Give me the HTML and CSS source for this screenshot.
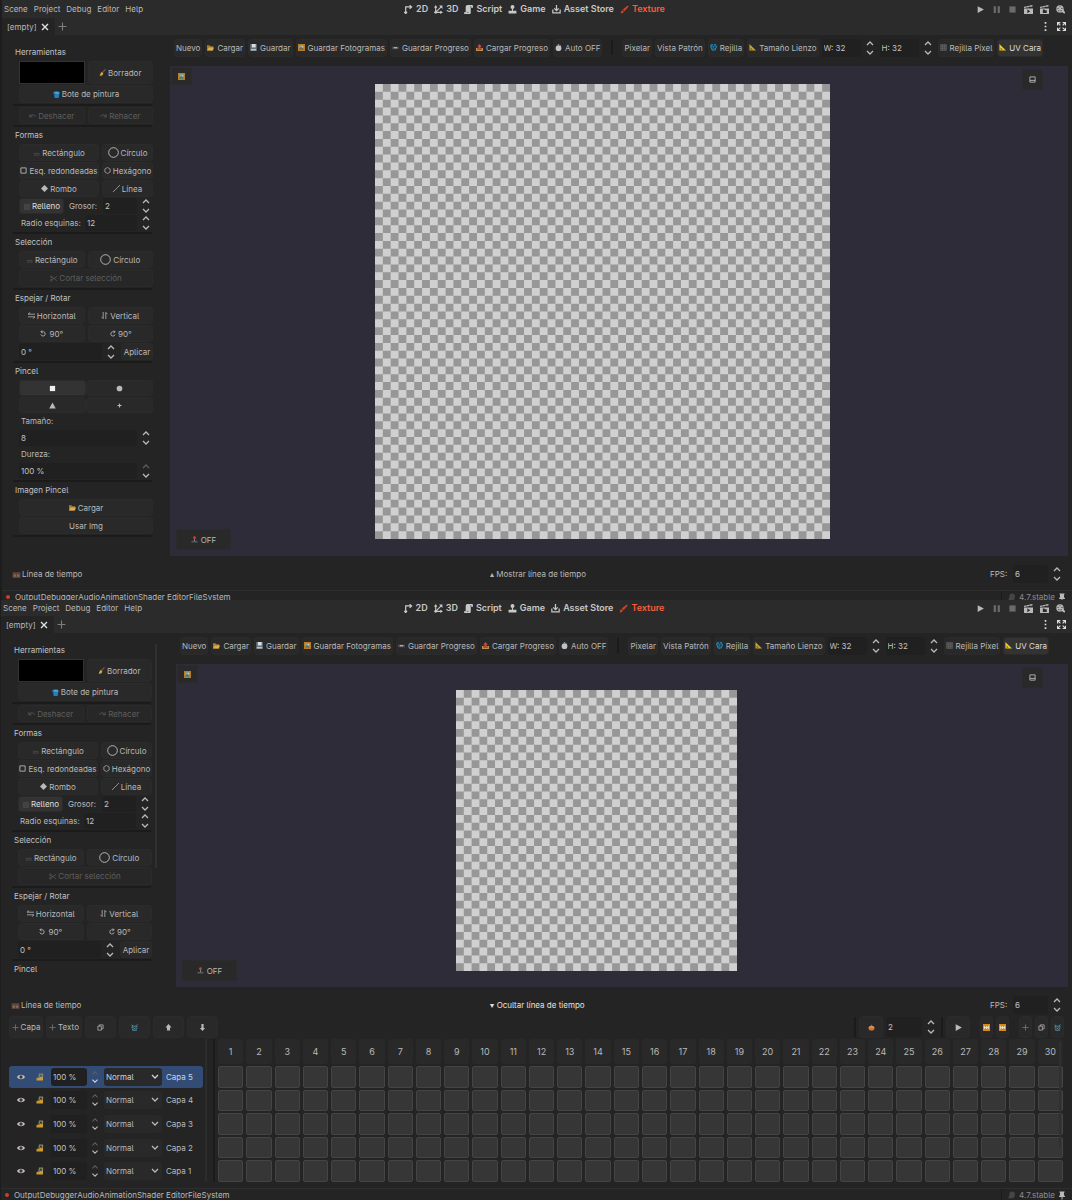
FILE: index.html
```html
<!DOCTYPE html>
<html lang="es">
<head>
<meta charset="utf-8">
<meta name="viewport" content="width=device-width, initial-scale=1">
<title>Texture Editor</title>
<link rel="stylesheet" href="styles.css">
</head>
<body>

<svg class="sprite" aria-hidden="true">
  <symbol id="i-2d" viewBox="0 0 16 16"><path d="M3 15V3.500H13M10 .5l3.500 3L10 6.500M.5 12L3 15.500 5.500 12" fill="none" stroke="currentColor" stroke-width="2.200"/></symbol>
  <symbol id="i-3d" viewBox="0 0 16 16"><path d="M3 2v11h11M3 13L13 3" fill="none" stroke="currentColor" stroke-width="2"/><path d="M0 5l3-5 3 5zM11 10l5 3-5 3zM9 1h6v6z" fill="currentColor"/><circle cx="3" cy="13" r="2.500" fill="currentColor"/></symbol>
  <symbol id="i-script" viewBox="0 0 16 16"><path d="M6 0h8a2 2 0 0 1 2 2v3h-4v9a2 2 0 0 1-2 2H2a2 2 0 0 1-2-3h3V3a3 3 0 0 1 3-3z" fill="currentColor"/><path d="M12 2v3M5 13h3" stroke="#2b2b2b" stroke-width="1"/></symbol>
  <symbol id="i-game" viewBox="0 0 16 16"><circle cx="8" cy="3.500" r="3.500" fill="currentColor"/><path d="M7 6h2v4h6v5H1v-5h6z" fill="currentColor"/></symbol>
  <symbol id="i-asset" viewBox="0 0 16 16"><path d="M8 0v9M4 6l4 4 4-4M1.500 8v6h13V8" fill="none" stroke="currentColor" stroke-width="2.200"/></symbol>
  <symbol id="i-brush" viewBox="0 0 16 16"><path d="M14 1l1.500 1.500L8 11l-3-3zM4 9l3 3c-1 2-3 3-6 3 1-2 1-4 3-6z" fill="#c9482c"/></symbol>
  <symbol id="i-play" viewBox="0 0 16 16"><path d="M3 2l11 6-11 6z" fill="currentColor"/></symbol>
  <symbol id="i-pause" viewBox="0 0 16 16"><path d="M3 2h4v12H3zM10 2h4v12h-4z" fill="currentColor"/></symbol>
  <symbol id="i-stop" viewBox="0 0 16 16"><path d="M2.500 2.500h11v11h-11z" fill="currentColor"/></symbol>
  <symbol id="i-scene" viewBox="0 0 16 16"><path d="M0 3l15-3v2.500L0 5.500zM0 6h16v9a1 1 0 0 1-1 1H1a1 1 0 0 1-1-1z" fill="currentColor"/><path d="M6 7.500l5 3.500-5 3.500z" fill="#2b2b2b"/><path d="M3 1.500l2 3M8 .5l2 3" stroke="#2b2b2b"/></symbol>
  <symbol id="i-clap" viewBox="0 0 16 16"><path d="M0 3l15-3v2.500L0 5.500zM0 6h16v9a1 1 0 0 1-1 1H1a1 1 0 0 1-1-1z" fill="currentColor"/><path d="M5 8h3l1 1.500h3V14H5z" fill="#2b2b2b"/><path d="M3 1.500l2 3M8 .5l2 3" stroke="#2b2b2b"/></symbol>
  <symbol id="i-movie" viewBox="0 0 16 16"><circle cx="7" cy="7" r="6.500" fill="currentColor"/><path d="M9 12c2 0 3 3 7 3v-3c-2 0-2-3-3-5z" fill="currentColor"/><g fill="#2b2b2b"><circle cx="7" cy="3" r="1"/><circle cx="3.500" cy="6" r="1"/><circle cx="10.500" cy="6" r="1"/><circle cx="5" cy="10" r="1"/><circle cx="9" cy="10" r="1"/></g></symbol>
  <symbol id="i-dots" viewBox="0 0 16 16"><path d="M6.500 0h3v3h-3zM6.500 6.500h3v3h-3zM6.500 13h3v3h-3z" fill="currentColor"/></symbol>
  <symbol id="i-expand" viewBox="0 0 16 16"><path d="M1 6V1h5M10 1h5v5M15 10v5h-5M6 15H1v-5M1 1l5 5M15 1l-5 5M15 15l-5-5M1 15l5-5" fill="none" stroke="currentColor" stroke-width="2"/></symbol>
  <symbol id="i-close" viewBox="0 0 16 16"><path d="M2 2l12 12M14 2L2 14" stroke="currentColor" stroke-width="2.800" fill="none"/></symbol>
  <symbol id="i-plus" viewBox="0 0 16 16"><path d="M8 1v14M1 8h14" stroke="currentColor" stroke-width="2" fill="none"/></symbol>
  <symbol id="i-updown" viewBox="0 0 8 14"><path d="M1 4l3-3 3 3M1 10l3 3 3-3" fill="none" stroke="currentColor" stroke-width="1.300"/></symbol>
  <symbol id="i-updown-max" viewBox="0 0 8 14"><path d="M1 4l3-3 3 3" fill="none" stroke="#5c5c5c" stroke-width="1.300"/><path d="M1 10l3 3 3-3" fill="none" stroke="currentColor" stroke-width="1.300"/></symbol>
  <symbol id="i-chevron" viewBox="0 0 8 8"><path d="M1 2l3 3 3-3" fill="none" stroke="currentColor" stroke-width="1.300"/></symbol>
  <symbol id="i-folder" viewBox="0 0 16 16"><path d="M0 3h6l1 2h7v10H0z" fill="#a87a2c"/><path d="M4 8h12l-3 7H0z" fill="#dcae52"/></symbol>
  <symbol id="i-disk" viewBox="0 0 16 16"><path d="M0 0h16v16H0z" fill="#59616b"/><path d="M4 0h9v8H4z" fill="#d9dde0"/><path d="M2 11h12v4H2z" fill="#b9c0c6"/></symbol>
  <symbol id="i-frame" viewBox="0 0 16 16"><path d="M0 0h16v16H0z" fill="#bd7c20"/><path d="M3 3h10v10H3z" fill="#79a8b8"/><path d="M3 10l4-3 6 4v2H3z" fill="#59735c"/><circle cx="10" cy="6" r="1.500" fill="#e4d9a8"/></symbol>
  <symbol id="i-box" viewBox="0 0 16 16"><path d="M0 6h16v6H0z" fill="#484848"/><path d="M4 7h8v3H4z" fill="#b8b8b8"/></symbol>
  <symbol id="i-outbox" viewBox="0 0 16 16"><path d="M0 9h16v7H0z" fill="#c58a4e"/><path d="M3 10h10v3H3z" fill="#5e4634"/><path d="M8 0l5 6h-3v5H6V6H3z" fill="#d44a3a"/></symbol>
  <symbol id="i-watch" viewBox="0 0 16 16"><circle cx="8" cy="9.500" r="6.500" fill="#bfc3c6"/><path d="M6.500 0h3v4h-3zM12 2l2 2-1 1-2-2z" fill="#8d9194"/></symbol>
  <symbol id="i-globe" viewBox="0 0 16 16"><path d="M2 2h12v6h-2v6H4V9H2z" fill="none" stroke="#1c8fc4" stroke-width="3" stroke-dasharray="5 2"/><path d="M5 6h6M8 4v8" stroke="#1c84b4" stroke-width="1.500"/></symbol>
  <symbol id="i-ruler" viewBox="0 0 16 16"><path d="M1 0l15 15H1z" fill="currentColor"/><path d="M4 9l4 3.500H4z" fill="#2b2b2b"/></symbol>
  <symbol id="i-grid" viewBox="0 0 16 16"><path d="M1 1h14v14H1zM5.500 1v14M10.500 1v14M1 5.500h14M1 10.500h14" fill="#484848" stroke="#6c6c6c" stroke-width="1"/></symbol>
  <symbol id="i-broom" viewBox="0 0 16 16"><path d="M15 1L8 8" stroke="#8d5636" stroke-width="2.500"/><path d="M6 6l4 4c-1 4-5 6-9 5 2-2 2-5 5-9z" fill="#dca53a"/></symbol>
  <symbol id="i-bucket" viewBox="0 0 16 16"><path d="M1 4h14l-2 12H4z" fill="#2380bd"/><ellipse cx="8" cy="4" rx="7" ry="3" fill="#4aa0cf"/><path d="M1 5h3v6" stroke="#1c679b" stroke-width="2" fill="none"/></symbol>
  <symbol id="i-undo" viewBox="0 0 16 16"><path d="M2 5v6h6M2 11c4-6 11-6 13 0" fill="none" stroke="currentColor" stroke-width="1.800"/></symbol>
  <symbol id="i-redo" viewBox="0 0 16 16"><path d="M14 5v6H8M14 11C10 5 3 5 1 11" fill="none" stroke="currentColor" stroke-width="1.800"/></symbol>
  <symbol id="i-rect" viewBox="0 0 16 16"><path d="M3 10h11v4H3z" fill="none" stroke="#505050" stroke-width="1.600"/></symbol>
  <symbol id="i-circle" viewBox="0 0 16 16"><circle cx="8" cy="8" r="7" fill="none" stroke="currentColor" stroke-width="1.400"/></symbol>
  <symbol id="i-square" viewBox="0 0 16 16"><path d="M2 2h12v12H2z" fill="none" stroke="currentColor" stroke-width="2"/></symbol>
  <symbol id="i-hex" viewBox="0 0 16 16"><path d="M8 1l6 3.500v7L8 15l-6-3.500v-7z" fill="none" stroke="currentColor" stroke-width="1.600"/></symbol>
  <symbol id="i-diamond" viewBox="0 0 16 16"><path d="M8 0l8 8-8 8-8-8z" fill="currentColor"/></symbol>
  <symbol id="i-line" viewBox="0 0 16 16"><path d="M0 16L16 0" stroke="currentColor" stroke-width="1.600"/></symbol>
  <symbol id="i-fill" viewBox="0 0 16 16"><path d="M3 3h12v12H3z" fill="#424242" stroke="#555"/></symbol>
  <symbol id="i-cut" viewBox="0 0 16 16"><path d="M4 11L16 3M4 5l12 8" stroke="currentColor" stroke-width="1.600"/><circle cx="3" cy="4" r="2" fill="none" stroke="currentColor" stroke-width="1.600"/><circle cx="3" cy="12" r="2" fill="none" stroke="currentColor" stroke-width="1.600"/></symbol>
  <symbol id="i-horiz" viewBox="0 0 16 16"><path d="M16 5H0l5-4M0 11h16l-5 4" fill="none" stroke="currentColor" stroke-width="1.800"/></symbol>
  <symbol id="i-vert" viewBox="0 0 16 16"><path d="M5 0v15l-4-4M11 16V1l4 4" fill="none" stroke="currentColor" stroke-width="1.800"/></symbol>
  <symbol id="i-ccw" viewBox="0 0 16 16"><path d="M5 1L2 4l4 3M2 4h6a5 5 0 1 1-6 6" fill="none" stroke="currentColor" stroke-width="1.900"/></symbol>
  <symbol id="i-cw" viewBox="0 0 16 16"><path d="M11 1l3 3-4 3M14 4H8a5 5 0 1 0 6 6" fill="none" stroke="currentColor" stroke-width="1.900"/></symbol>
  <symbol id="i-bsquare" viewBox="0 0 16 16"><path d="M2 2h12v12H2z" fill="#f0f0f0"/></symbol>
  <symbol id="i-bcircle" viewBox="0 0 16 16"><circle cx="8" cy="8" r="6.500" fill="currentColor"/></symbol>
  <symbol id="i-btri" viewBox="0 0 16 16"><path d="M8 1l7.500 14H.5z" fill="currentColor"/></symbol>
  <symbol id="i-bstar" viewBox="0 0 16 16"><path d="M8 2l1.500 4.500L14 8 9.500 9.500 8 14 6.500 9.500 2 8l4.500-1.500z" fill="currentColor"/></symbol>
  <symbol id="i-film" viewBox="0 0 16 16"><path d="M1 4h14v10H1z" fill="#5d4638"/><path d="M3 8h4v4H3zM9 8h4v4H9z" fill="#8a6a55"/></symbol>
  <symbol id="i-joy" viewBox="0 0 16 16"><path d="M1 11h14v4H1z" fill="#4f5a60"/><path d="M7 5h2v7H7z" fill="#8a979e"/><circle cx="8" cy="4" r="3.200" fill="#c9402f"/></symbol>
  <symbol id="i-window" viewBox="0 0 16 16"><path d="M2 2h12v12H2zM2 10h12" fill="none" stroke="currentColor" stroke-width="2"/></symbol>
  <symbol id="i-pin" viewBox="0 0 16 16"><path d="M3 0h10v2h-1v5l2 3v1H9v5H7v-5H2v-1l2-3V2H3z" fill="currentColor"/></symbol>
  <symbol id="i-bell" viewBox="0 0 16 16"><path d="M9 1c4 0 6 3 5 7l-2 5H2c0-2 2-2 2-6s2-6 5-6z" fill="currentColor"/></symbol>
  <symbol id="i-copy" viewBox="0 0 16 16"><path d="M2 5h8v9H2zM5 5V2h9v9h-4" fill="none" stroke="currentColor" stroke-width="1.700"/></symbol>
  <symbol id="i-trash" viewBox="0 0 16 16"><path d="M2 5h12l-2 10H4z" fill="none" stroke="#5c9fb5" stroke-width="2" stroke-dasharray="3 1"/><path d="M1 2l5 3M15 1l-5 4M5 8l6 5M11 8l-6 5" stroke="#5c9fb5" stroke-width="1.600"/></symbol>
  <symbol id="i-up" viewBox="0 0 16 16"><path d="M8 0l7 8h-3.500v7h-7V8H1z" fill="currentColor"/></symbol>
  <symbol id="i-down" viewBox="0 0 16 16"><path d="M8 16L2 9h3.500V0h5v9H14z" fill="currentColor"/></symbol>
  <symbol id="i-onion" viewBox="0 0 16 16"><path d="M8 0l1 4c4 0 6 3 6 5 0 4-3 6-7 6s-7-2-7-6c0-2 2-5 6-5z" fill="#c9743b"/><path d="M3 8c2-2 8-2 10 0" stroke="#edbd8f" stroke-width="2" fill="none"/></symbol>
  <symbol id="i-ff" viewBox="0 0 16 16"><path d="M0 0h16v16H0z" fill="#d98613"/><path d="M2 4l5 4-5 4zM7 4l5 4-5 4zM12 4h2v8h-2z" fill="#f1e6d4"/></symbol>
  <symbol id="i-rw" viewBox="0 0 16 16"><path d="M0 0h16v16H0z" fill="#d98613"/><path d="M14 4L9 8l5 4zM9 4L4 8l5 4zM2 4h2v8H2z" fill="#f1e6d4"/></symbol>
  <symbol id="i-eye" viewBox="0 0 16 16"><path d="M0 8c4-6 12-6 16 0-4 6-12 6-16 0z" fill="#c8c8c8"/><circle cx="8" cy="8" r="3.500" fill="#4a352d"/></symbol>
  <symbol id="i-lock" viewBox="0 0 16 16"><path d="M1 10L14 7v8H1z" fill="#d09c2c"/><path d="M6 8l1-6h6v6" fill="none" stroke="#8d8468" stroke-width="2.500"/><path d="M3 12l8-7" stroke="#6c8a86" stroke-width="1.500"/></symbol>
</svg>

<template id="header">
  <header class="top">
    <div class="menu-row">
      <nav class="menus"><button>Scene</button><button>Project</button><button>Debug</button><button>Editor</button><button>Help</button></nav>
      <nav class="modes">
        <button><svg><use href="#i-2d"/></svg>2D</button>
        <button><svg><use href="#i-3d"/></svg>3D</button>
        <button><svg><use href="#i-script"/></svg>Script</button>
        <button><svg><use href="#i-game"/></svg>Game</button>
        <button><svg><use href="#i-asset"/></svg>Asset Store</button>
        <button class="current"><svg><use href="#i-brush"/></svg>Texture</button>
      </nav>
      <div class="run">
        <button aria-label="Play"><svg><use href="#i-play"/></svg></button>
        <button class="dim" aria-label="Pause"><svg><use href="#i-pause"/></svg></button>
        <button class="dim" aria-label="Stop"><svg><use href="#i-stop"/></svg></button>
        <button aria-label="Play scene"><svg><use href="#i-scene"/></svg></button>
        <button aria-label="Play custom scene"><svg><use href="#i-clap"/></svg></button>
        <button aria-label="Movie maker"><svg><use href="#i-movie"/></svg></button>
      </div>
    </div>
    <div class="tab-row">
      <div class="scene-tab"><span>[empty]</span><button aria-label="Close tab"><svg><use href="#i-close"/></svg></button></div>
      <button class="add-tab" aria-label="New tab"><svg><use href="#i-plus"/></svg></button>
      <div class="tab-tools">
        <button aria-label="Options"><svg><use href="#i-dots"/></svg></button>
        <button aria-label="Distraction free"><svg><use href="#i-expand"/></svg></button>
      </div>
    </div>
  </header>
</template>

<template id="sidebar">
  <aside class="tools">
    <h2>Herramientas</h2>
    <div class="row tall even"><button class="swatch" aria-label="Color"></button><button class="btn"><svg><use href="#i-broom"/></svg>Borrador</button></div>
    <button class="btn big"><svg><use href="#i-bucket"/></svg>Bote de pintura</button>
    <hr>
    <div class="row even"><button class="btn" disabled><svg><use href="#i-undo"/></svg>Deshacer</button><button class="btn" disabled><svg><use href="#i-redo"/></svg>Rehacer</button></div>
    <hr>
    <h2>Formas</h2>
    <div class="row shapes"><button class="btn"><svg><use href="#i-rect"/></svg>Rectángulo</button><button class="btn"><svg class="lg"><use href="#i-circle"/></svg>Círculo</button></div>
    <div class="row shapes"><button class="btn"><svg><use href="#i-square"/></svg>Esq. redondeadas</button><button class="btn"><svg><use href="#i-hex"/></svg>Hexágono</button></div>
    <div class="row shapes"><button class="btn"><svg><use href="#i-diamond"/></svg>Rombo</button><button class="btn"><svg><use href="#i-line"/></svg>Línea</button></div>
    <div class="row low fill-row"><button class="btn on"><svg><use href="#i-fill"/></svg>Relleno</button><label class="spin"><span>Grosor:</span><input type="text" value="2"><svg class="arrows"><use href="#i-updown"/></svg></label></div>
    <div class="row low"><label class="spin lead"><span>Radio esquinas:</span><input type="text" value="12"><svg class="arrows"><use href="#i-updown"/></svg></label></div>
    <hr>
    <h2>Selección</h2>
    <div class="row even"><button class="btn"><svg><use href="#i-rect"/></svg>Rectángulo</button><button class="btn"><svg class="lg"><use href="#i-circle"/></svg>Círculo</button></div>
    <button class="btn big" disabled><svg><use href="#i-cut"/></svg>Cortar selección</button>
    <hr>
    <h2>Espejar / Rotar</h2>
    <div class="row even"><button class="btn"><svg><use href="#i-horiz"/></svg>Horizontal</button><button class="btn"><svg><use href="#i-vert"/></svg>Vertical</button></div>
    <div class="row even"><button class="btn"><svg><use href="#i-ccw"/></svg>90°</button><button class="btn"><svg><use href="#i-cw"/></svg>90°</button></div>
    <div class="row"><label class="spin"><input type="text" value="0 °" aria-label="Ángulo"><svg class="arrows"><use href="#i-updown"/></svg></label><button class="btn apply">Aplicar</button></div>
    <hr>
    <h2 class="brush">Pincel</h2>
    <div class="row low even tight"><button class="btn on" aria-label="Cuadrado"><svg><use href="#i-bsquare"/></svg></button><button class="btn" aria-label="Redondo"><svg><use href="#i-bcircle"/></svg></button></div>
    <div class="row low even tight"><button class="btn" aria-label="Triángulo"><svg><use href="#i-btri"/></svg></button><button class="btn" aria-label="Estrella"><svg><use href="#i-bstar"/></svg></button></div>
    <div class="field">Tamaño:</div>
    <div class="row low"><label class="spin"><input type="text" value="8" aria-label="Tamaño"><svg class="arrows"><use href="#i-updown"/></svg></label></div>
    <div class="field">Dureza:</div>
    <div class="row low"><label class="spin"><input type="text" value="100 %" aria-label="Dureza"><svg class="arrows"><use href="#i-updown-max"/></svg></label></div>
    <hr>
    <h2>Imagen Pincel</h2>
    <button class="btn"><svg><use href="#i-folder"/></svg>Cargar</button>
    <button class="btn">Usar Img</button>
    <hr>
  </aside>
</template>

<template id="toolbar">
  <div class="toolbar">
    <button class="btn">Nuevo</button>
    <button class="btn"><svg><use href="#i-folder"/></svg>Cargar</button>
    <button class="btn"><svg><use href="#i-disk"/></svg>Guardar</button>
    <button class="btn"><svg><use href="#i-frame"/></svg>Guardar Fotogramas</button>
    <button class="btn"><svg><use href="#i-box"/></svg>Guardar Progreso</button>
    <button class="btn"><svg><use href="#i-outbox"/></svg>Cargar Progreso</button>
    <button class="btn"><svg><use href="#i-watch"/></svg>Auto OFF</button>
    <span class="rule"></span>
    <button class="btn">Pixelar</button>
    <button class="btn">Vista Patrón</button>
    <button class="btn"><svg><use href="#i-globe"/></svg>Rejilla</button>
    <button class="btn gold"><svg><use href="#i-ruler"/></svg>Tamaño Lienzo</button>
    <label class="spin"><input type="text" value="W: 32" aria-label="Ancho"><svg class="arrows"><use href="#i-updown"/></svg></label>
    <label class="spin"><input type="text" value="H: 32" aria-label="Alto"><svg class="arrows"><use href="#i-updown"/></svg></label>
    <button class="btn"><svg><use href="#i-grid"/></svg>Rejilla Píxel</button>
    <button class="btn on yellow"><svg><use href="#i-ruler"/></svg>UV Cara</button>
  </div>
</template>

<template id="overlays">
  <button class="btn float frame-toggle" aria-label="Referencia"><svg><use href="#i-frame"/></svg></button>
  <button class="btn float window-toggle" aria-label="Ventana"><svg><use href="#i-window"/></svg></button>
  <button class="btn float joystick"><svg><use href="#i-joy"/></svg>OFF</button>
</template>

<template id="status">
  <footer class="status">
    <span class="dot"></span>
    <nav><button>Output</button><button>Debugger</button><button>Audio</button><button>Animation</button><button>Shader Editor</button><button>FileSystem</button></nav>
    <div class="version"><svg class="bell"><use href="#i-bell"/></svg><span>4.7.stable</span><svg class="pin"><use href="#i-pin"/></svg></div>
  </footer>
</template>

<section class="editor closed">
  <div data-include="header"></div>
  <main class="work">
    <div data-include="sidebar"></div>
    <div class="stage">
      <div data-include="toolbar"></div>
      <div class="canvas">
        <svg class="board" viewBox="0 0 58 58" data-cells="58"></svg>
        <div data-include="overlays"></div>
      </div>
    </div>
  </main>
  <div class="timeline-bar">
    <span class="caption"><svg><use href="#i-film"/></svg>Línea de tiempo</span>
    <button class="toggle">▴ Mostrar línea de tiempo</button>
    <label class="spin fps"><span>FPS:</span><input type="text" value="6"><svg class="arrows"><use href="#i-updown"/></svg></label>
  </div>
  <div data-include="status"></div>
</section>

<section class="editor open">
  <div data-include="header"></div>
  <main class="work">
    <div data-include="sidebar"></div>
    <div class="stage">
      <div data-include="toolbar"></div>
      <div class="canvas">
        <svg class="board" viewBox="0 0 36 36" data-cells="36"></svg>
        <div data-include="overlays"></div>
      </div>
    </div>
  </main>
  <div class="timeline-bar">
    <span class="caption"><svg><use href="#i-film"/></svg>Línea de tiempo</span>
    <button class="toggle bright">▾ Ocultar línea de tiempo</button>
    <label class="spin fps"><span>FPS:</span><input type="text" value="6"><svg class="arrows"><use href="#i-updown"/></svg></label>
  </div>
  <div class="timeline-tools">
    <button class="btn add layer-add"><svg><use href="#i-plus"/></svg>Capa</button>
    <button class="btn add text-add"><svg><use href="#i-plus"/></svg>Texto</button>
    <button class="btn wide" aria-label="Duplicar capa"><svg><use href="#i-copy"/></svg></button>
    <button class="btn wide" aria-label="Borrar capa"><svg><use href="#i-trash"/></svg></button>
    <button class="btn wide" aria-label="Subir capa"><svg><use href="#i-up"/></svg></button>
    <button class="btn wide" aria-label="Bajar capa"><svg><use href="#i-down"/></svg></button>
    <div class="playback">
      <span class="rule"></span>
      <button class="btn mid" aria-label="Papel cebolla"><svg><use href="#i-onion"/></svg></button>
      <label class="spin"><input type="text" value="2" aria-label="Fotogramas de cebolla"><svg class="arrows"><use href="#i-updown"/></svg></label>
      <span class="rule"></span>
      <button class="btn mid play" aria-label="Reproducir"><svg><use href="#i-play"/></svg></button>
      <div class="pair"><button class="btn thin" aria-label="Siguiente"><svg><use href="#i-ff"/></svg></button><button class="btn thin" aria-label="Anterior"><svg><use href="#i-rw"/></svg></button></div>
      <div class="pair"><button class="btn thin add" aria-label="Añadir fotograma"><svg><use href="#i-plus"/></svg></button><button class="btn thin" aria-label="Duplicar fotograma"><svg><use href="#i-copy"/></svg></button><button class="btn thin" aria-label="Borrar fotograma"><svg><use href="#i-trash"/></svg></button></div>
    </div>
  </div>
  <div class="timeline">
    <div class="layers" id="layers"></div>
    <div class="frames" id="frames"></div>
  </div>
  <div data-include="status"></div>
</section>

<script src="app.js"></script>
</body>
</html>
```

FILE: app.js
```js
// Fill every placeholder with the template it names.
document.querySelectorAll('[data-include]').forEach((slot) => {
  slot.replaceWith(document.getElementById(slot.dataset.include).content.cloneNode(true));
});

// Transparency checkerboard: one unit per cell, light cell first.
document.querySelectorAll('.board').forEach((board) => {
  const n = Number(board.dataset.cells);
  let d = '';
  for (let y = 0; y < n; y++) {
    for (let x = (y + 1) % 2; x < n; x += 2) d += `M${x} ${y}h1v1h-1z`;
  }
  board.innerHTML = `<path class="dark" d="${d}"/>`;
});

const layers = document.getElementById('layers');
for (let n = 5; n >= 1; n--) {
  layers.insertAdjacentHTML('beforeend', `
    <div class="layer${n === 5 ? ' selected' : ''}">
      <button aria-label="Visible"><svg><use href="#i-eye"/></svg></button>
      <button aria-label="Bloquear"><svg><use href="#i-lock"/></svg></button>
      <label class="spin"><input type="text" value="100 %" aria-label="Opacidad"><svg class="arrows"><use href="#i-updown-max"/></svg></label>
      <label class="blend"><select aria-label="Fusión"><option>Normal</option></select><svg><use href="#i-chevron"/></svg></label>
      <span>Capa ${n}</span>
    </div>`);
}

const frames = document.getElementById('frames');
let cells = '';
for (let f = 1; f <= 30; f++) cells += `<button class="number">${f}</button>`;
for (let l = 5; l >= 1; l--) {
  for (let f = 1; f <= 30; f++) cells += `<button class="cell" aria-label="Capa ${l}, fotograma ${f}"></button>`;
}
frames.innerHTML = cells;
```

FILE: styles.css
```css
* { box-sizing: border-box; }

body {
  margin: 0;
  height: 100vh;
  display: grid;
  grid-template-rows: minmax(0, 1fr) minmax(0, 1fr);
  background: #242424;
  color: #b9b9b9;
  font: 8px/14px Inter, "Liberation Sans", sans-serif;
  font-feature-settings: "cv05";
}

.sprite { position: absolute; width: 0; height: 0; }
svg { width: 9px; height: 9px; flex: none; display: block; }

button, input, select { font: inherit; font-feature-settings: inherit; color: inherit; margin: 0; padding: 0; border: 0; background: none; }
button { display: flex; align-items: center; justify-content: center; white-space: nowrap; }

.editor {
  display: flex;
  flex-direction: column;
  min-height: 0;
  overflow: hidden;
  border-left: 2px solid #1d1d1d;
}
.open { border-left-width: 1px; }

/* header */
.top { flex: none; background: #2b2b2b; }
.menu-row { height: 18px; display: grid; grid-template-columns: 1fr auto 1fr; align-items: center; padding: 0 7px 0 2px; }
.open .menu-row { height: 16px; }
.menus { display: flex; gap: 6px; }
.modes { display: flex; gap: 6px; font-weight: 600; font-size: 9px; color: #c8c8c8; }
.modes button { gap: 3px; }
.modes .current { color: #fa5c3a; }
.run { display: flex; gap: 7px; justify-content: flex-end; }
.dim { color: #6b6b6b; }
.tab-row { height: 17px; display: flex; align-items: center; padding-right: 6px; }
.scene-tab { display: flex; align-items: center; gap: 4px; height: 17px; padding: 0 6px 0 5px; background: #242424; border-radius: 3px 3px 0 0; }
.scene-tab svg { color: #e0e0e0; width: 8px; height: 8px; }
.add-tab { color: #7d7d7d; margin-left: 3px; }
.tab-tools { margin-left: auto; display: flex; gap: 7px; color: #dcdcdc; }

/* shared controls */
.btn { gap: 2px; height: 17px; padding: 0 1px; background: #292929; border-radius: 4px; box-shadow: inset 0 0 0 1px #2b2b2b; }
.btn svg { width: 7px; height: 7px; }
.btn .lg { width: 11px; height: 11px; }
.btn.on { background: #333; color: #dedede; }
.btn:disabled { color: #5e5e5e; background: #272727; }
.spin { display: flex; align-items: center; flex: 1; min-width: 0; }
.spin input { flex: 1; width: 0; min-width: 0; height: 100%; padding-left: 2px; background: #202020; border-radius: 3px; color: #c2c2c2; }
.spin .arrows { width: 8px; height: 14px; margin: 0 3px 0 5px; }
.rule { width: 2px; height: 15px; background: #1b1b1b; }

/* work area */
.work { flex: 1; min-height: 0; display: flex; }
.tools {
  flex: none;
  width: 151px;
  display: flex;
  flex-direction: column;
  gap: 1px;
  padding: 10px 0 0 17px;
  overflow: hidden;
}
.open .tools { position: relative; width: 158px; padding-right: 7px; }
.open .tools::after { content: ""; position: absolute; right: 2px; top: 11px; width: 2px; height: 224px; background: #303030; }
.open .brush ~ * { display: none; }
.tools > * { flex: none; }
.tools h2 { margin: 0 0 0 -4px; font-size: 8px; font-weight: 400; line-height: 15px; color: #c2c2c2; }
.tools hr { height: 2px; margin: 0 1px 0 -6px; border: 0; background: #1b1b1b; align-self: stretch; }
.row { height: 17px; display: flex; gap: 3px; align-items: stretch; }
.row .btn { height: auto; }
.row.tall { height: 23px; }
.btn.big { height: 18px; }
.row.low { height: 16px; }
.even > * { flex: 1 1 0; }
.row.tight { gap: 0; }
.shapes > :first-child { flex: 0 0 80px; }
.shapes > :last-child { flex: 1; }
.swatch { background: #000; border: 1px solid #333; }
.fill-row .btn { flex: 0 0 45px; }
.fill-row .spin span { width: 36px; padding-left: 2px; }
.lead span { width: 66px; padding-left: 2px; }
.field { padding-left: 2px; line-height: 15px; }
.apply { flex: 0 0 32px; }

.stage { flex: 1; min-width: 0; display: flex; flex-direction: column; margin: 0 4px 0 17px; }
.toolbar { height: 31px; flex: none; display: flex; align-items: center; gap: 3px; padding: 0 0 6px 4px; }
.toolbar .btn { height: 18px; padding: 0 2px; gap: 3px; }
.toolbar .rule { margin: 0 6px; }
.toolbar .spin { flex: 0 0 55px; height: 18px; }
.gold svg { color: #c9a02c; }
.yellow svg { color: #f2c51f; }
.canvas { flex: 1; min-height: 0; position: relative; background: #2d2c38; padding: 18px 0 17px 205px; }
.open .canvas { padding: 26px 0 16px 280px; }
.board { height: 100%; width: auto; aspect-ratio: 1; background: #d0d0d0; }
.dark { fill: #979797; }
.float { position: absolute; height: 21px; background: #292929; }
.frame-toggle { left: 1px; top: 1px; width: 21px; height: 18px; }
.window-toggle { right: 25px; top: 3px; width: 21px; }
.joystick { left: 6px; bottom: 6px; width: 55px; gap: 3px; }

/* timeline */
.timeline-bar { flex: none; height: 34px; display: grid; grid-template-columns: 1fr auto 1fr; align-items: center; padding: 9px 8px 7px 10px; }
.open .timeline-bar { height: 29px; padding-bottom: 2px; }
.caption { display: flex; align-items: center; gap: 1px; }
.bright { color: #e2e2e2; }
.fps { justify-self: end; width: 74px; height: 18px; }
.fps span { width: 23px; }
.timeline-tools { flex: none; display: flex; gap: 3px; padding: 0 8px 1px; height: 23px; }
.timeline-tools .btn { height: 22px; }
.add svg { color: #6f6f6f; }
.layer-add { width: 34px; }
.text-add { width: 36px; }
.wide { width: 31px; }
.playback { margin-left: auto; display: flex; gap: 3px; align-items: center; }
.playback .spin { flex: 0 0 52px; height: 20px; }
.playback .rule { height: 20px; }
.mid { width: 24px; }
.play svg { width: 9px; height: 9px; }
.thin { width: 13px; }
.pair { display: flex; gap: 3px; margin-left: 7px; }

.timeline { flex: none; height: 149px; display: flex; padding: 0 9px 6px 8px; }
.layers { width: 198px; padding: 27px 2px 0 0; border-right: 2px solid #2c2c2c; display: grid; gap: 2px; grid-auto-rows: 1fr; }
.layer { display: flex; align-items: center; border-radius: 3px; padding: 1px 0; }
.layer > button { width: 20px; margin-left: 2px; }
.layer > button + button { width: 18px; margin: 0 2px 0 0; }
.layer button svg { width: 8px; height: 8px; }
.layer .spin { flex: 0 0 53px; height: 18px; }
.layer .spin .arrows { height: 12px; margin: 0 5px 0 4px; }
.blend { display: grid; grid-template-columns: 1fr 14px; width: 58px; height: 18px; align-items: center; background: #292929; border-radius: 3px; }
.blend select { grid-area: 1 / 1 / 2 / 3; appearance: none; padding-left: 2px; height: 18px; }
.blend svg { grid-area: 1 / 2; justify-self: center; width: 8px; height: 8px; pointer-events: none; }
.layer > span { margin-left: 4px; }
.selected { background: #324c76; color: #c8d3e6; }
.frames { position: relative; flex: 1; margin-left: 6px; padding-left: 3px; border-left: 2px solid #1b1b1b; display: grid; grid-template-columns: repeat(30, minmax(0, 1fr)); grid-template-rows: 25px repeat(5, minmax(0, 1fr)); gap: 2px 3px; }
.frames::after { content: ""; position: absolute; right: 2px; top: 3px; width: 2px; height: 106px; background: #303030; }
.number { background: #292929; border-radius: 3px; font-size: 9px; }
.cell { background: #363636; border: 1px solid #444; border-radius: 2px; }

/* status bar */
.status { flex: none; height: 10px; overflow: hidden; border-top: 1px solid #2e2e2e; display: flex; align-items: flex-start; padding: 0 4px; line-height: 12px; }
.open .status { height: 12px; }
.status nav { display: flex; }
.dot { width: 4px; height: 4px; border-radius: 50%; background: #c8402f; margin: 4px 5px 0 0; }
.version { margin-left: auto; display: flex; gap: 3px; padding: 0 2px 0 5px; border-left: 1px solid #1b1b1b; color: #8c8c8c; }
.version svg { margin-top: 2px; }
.bell { color: #454545; }
.pin { color: #b9b9b9; width: 8px; }
```
